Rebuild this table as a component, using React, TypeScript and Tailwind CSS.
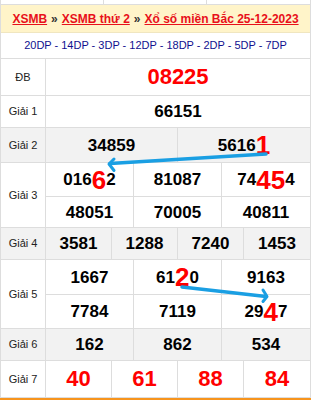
import React from "react";

const B = "border-[#dddddd]";

function Label({ children }: { children: React.ReactNode }) {
  return (
    <div className="w-[45px] shrink-0 border-r border-[#dddddd] flex items-center justify-center text-[11px] text-[#222]">
      {children}
    </div>
  );
}

function Num({ children, big = false }: { children: React.ReactNode; big?: boolean }) {
  return (
    <div className={"flex items-center justify-center leading-none font-bold " + (big ? "text-[22px] text-[#f00]" : "text-[17px] text-black")}>
      {children}
    </div>
  );
}

function R({ children }: { children: React.ReactNode }) {
  return <span className="text-[26px] text-[#f00]">{children}</span>;
}

export default function App() {
  return (
    <div className="relative w-[311px] h-[400px] bg-white font-['Liberation_Sans',Arial,sans-serif] overflow-hidden">
      <div className="border-l border-r border-[#dddddd]">
        <div className="h-[5px] grid grid-cols-3 divide-x divide-[#dddddd] border-b border-[#dddddd]">
          <div />
          <div />
          <div />
        </div>
        <div className="h-[28px] bg-[#fff4c9] border-b border-[#f0e6c0] flex items-center justify-center text-[12px] font-bold whitespace-nowrap">
          <span className="text-[#e8101a] underline">XSMB</span>
          <span className="text-[#333] mx-[4px]">»</span>
          <span className="text-[#e8101a] underline">XSMB thứ 2</span>
          <span className="text-[#333] mx-[4px]">»</span>
          <span className="text-[#e8101a] underline">Xổ số miền Bắc 25-12-2023</span>
        </div>
        <div className="h-[26px] border-b border-[#dddddd] flex items-center justify-center text-[11px] text-[#10108f] whitespace-nowrap">
          20DP - 14DP - 3DP - 12DP - 18DP - 2DP - 5DP - 7DP
        </div>
        {/* DB */}
        <div className={"h-[37px] flex border-b " + B}>
          <Label>ĐB</Label>
          <div className="flex-1 flex items-center justify-center">
            <Num big>08225</Num>
          </div>
        </div>
        {/* G1 */}
        <div className={"h-[32px] flex border-b " + B}>
          <Label>Giải 1</Label>
          <div className="flex-1 flex items-center justify-center">
            <Num>66151</Num>
          </div>
        </div>
        {/* G2 */}
        <div className={"h-[35px] flex border-b bg-[#f2f2f2] " + B}>
          <Label>Giải 2</Label>
          <div className="flex-1 grid grid-cols-2 divide-x divide-[#dddddd]">
            <Num>34859</Num>
            <Num>
              5616<R>1</R>
            </Num>
          </div>
        </div>
        {/* G3 */}
        <div className={"h-[65px] flex border-b " + B}>
          <Label>Giải 3</Label>
          <div className="flex-1 flex flex-col">
            <div className={"h-[34px] grid grid-cols-3 divide-x divide-[#dddddd] border-b " + B}>
              <Num>
                016<R>6</R>2
              </Num>
              <Num>81087</Num>
              <Num>
                74<R>45</R>4
              </Num>
            </div>
            <div className="flex-1 grid grid-cols-3 divide-x divide-[#dddddd]">
              <Num>48051</Num>
              <Num>70005</Num>
              <Num>40811</Num>
            </div>
          </div>
        </div>
        {/* G4 */}
        <div className={"h-[32px] flex border-b bg-[#f2f2f2] " + B}>
          <Label>Giải 4</Label>
          <div className="flex-1 grid grid-cols-4 divide-x divide-[#dddddd]">
            <Num>3581</Num>
            <Num>1288</Num>
            <Num>7240</Num>
            <Num>1453</Num>
          </div>
        </div>
        {/* G5 */}
        <div className={"h-[69px] flex border-b " + B}>
          <Label>Giải 5</Label>
          <div className="flex-1 flex flex-col">
            <div className={"h-[35px] grid grid-cols-3 divide-x divide-[#dddddd] border-b " + B}>
              <Num>1667</Num>
              <Num>
                61<R>2</R>0
              </Num>
              <Num>9163</Num>
            </div>
            <div className="flex-1 grid grid-cols-3 divide-x divide-[#dddddd]">
              <Num>7784</Num>
              <Num>7119</Num>
              <Num>
                29<R>4</R>7
              </Num>
            </div>
          </div>
        </div>
        {/* G6 */}
        <div className={"h-[32px] flex border-b bg-[#f2f2f2] " + B}>
          <Label>Giải 6</Label>
          <div className="flex-1 grid grid-cols-3 divide-x divide-[#dddddd]">
            <Num>162</Num>
            <Num>862</Num>
            <Num>534</Num>
          </div>
        </div>
        {/* G7 */}
        <div className={"h-[37px] flex border-b " + B}>
          <Label>Giải 7</Label>
          <div className="flex-1 grid grid-cols-4 divide-x divide-[#dddddd]">
            <Num big>40</Num>
            <Num big>61</Num>
            <Num big>88</Num>
            <Num big>84</Num>
          </div>
        </div>
      </div>
      <div className="h-[4px] bg-[#f7941d]" />
      <svg className="absolute left-0 top-0 pointer-events-none" width="311" height="400" viewBox="0 0 311 400">
        <g stroke="#1a9fe3" strokeLinecap="round" strokeLinejoin="round" fill="none">
          <line x1="266" y1="154" x2="110" y2="163.5" strokeWidth="3.5" />
          <polyline points="114,159 109,164 114,170.5" strokeWidth="3" />
          <line x1="182" y1="287" x2="266" y2="296.5" strokeWidth="3.5" />
          <polyline points="263,290 267,296.5 263,301.5" strokeWidth="3" />
        </g>
      </svg>
    </div>
  );
}
